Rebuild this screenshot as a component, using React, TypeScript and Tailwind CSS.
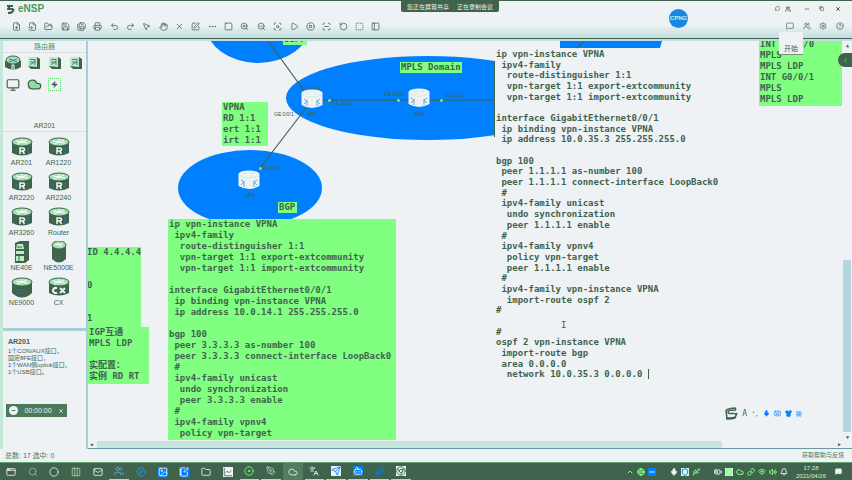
import type { ReactNode } from "react";
import {
  FilePlus, FileInput, FolderOpen, Save, SaveAll, Printer, Undo2, Redo2, MousePointer2, Hand, X, SquarePen,
  Ellipsis, Square, ZoomIn, ZoomOut, ScanSearch, Play, CircleStop, ScanLine, RotateCcw, BoxSelect, PanelLeft,
  MessageSquare, Settings, CircleHelp, Minus, Copy, Monitor, Zap, Search, Circle, Columns3, Mail,
  Compass, Globe, Image, Folder, NotebookPen, ChartLine, Disc, PenTool, Languages, Send, Bot, Feather,
  Chrome, ChevronUp, ChevronLeft, Mic, Shield, Usb, BatteryMedium, Wifi, Volume2, Keyboard, Shirt, Cloud,
  LayoutGrid, MessageCircle, Users, AppWindow, Cpu, Link, Bell,
} from "lucide-react";

const tools = [
  FilePlus, FileInput, FolderOpen, Save, SaveAll, Printer, Undo2, Redo2, MousePointer2, Hand, X, SquarePen,
  Ellipsis, Square, ZoomIn, ZoomOut, ScanSearch, Play, CircleStop, ScanLine, RotateCcw, BoxSelect, PanelLeft,
];

const leftConfig = `ip vpn-instance VPNA
 ipv4-family
  route-distinguisher 1:1
  vpn-target 1:1 export-extcommunity
  vpn-target 1:1 import-extcommunity

interface GigabitEthernet0/0/1
 ip binding vpn-instance VPNA
 ip address 10.0.14.1 255.255.255.0

bgp 100
 peer 3.3.3.3 as-number 100
 peer 3.3.3.3 connect-interface LoopBack0
 #
 ipv4-family unicast
  undo synchronization
  peer 3.3.3.3 enable
 #
 ipv4-family vpnv4
  policy vpn-target`;

const rightConfig = `ip vpn-instance VPNA
 ipv4-family
  route-distinguisher 1:1
  vpn-target 1:1 export-extcommunity
  vpn-target 1:1 import-extcommunity

interface GigabitEthernet0/0/1
 ip binding vpn-instance VPNA
 ip address 10.0.35.3 255.255.255.0

bgp 100
 peer 1.1.1.1 as-number 100
 peer 1.1.1.1 connect-interface LoopBack0
 #
 ipv4-family unicast
  undo synchronization
  peer 1.1.1.1 enable
 #
 ipv4-family vpnv4
  policy vpn-target
  peer 1.1.1.1 enable
 #
 ipv4-family vpn-instance VPNA
  import-route ospf 2
#

#
ospf 2 vpn-instance VPNA
 import-route bgp
 area 0.0.0.0
  network 10.0.35.3 0.0.0.0 `.split("\n");

const devices = ["AR201", "AR1220", "AR2220", "AR2240", "AR3260", "Router", "NE40E", "NE5000E", "NE9000", "CX"];

function DeviceIcon({ name }: { name: string }) {
  if (name === "NE40E")
    return (
      <svg viewBox="0 0 22 22" className="h-[22px] w-[22px]">
        <path d="M4 2 9 0h9v19l-4 3H4z" fill="#40634e" />
        <path d="M6 3h6l1 5H5zM5 10h8v3H5zM5 15h8v5H5z" fill="#b9efc4" />
        <path d="M6 6h5M8 15v5" stroke="#40634e" />
      </svg>
    );
  if (name === "NE5000E")
    return (
      <svg viewBox="0 0 22 22" className="h-[22px] w-[22px]">
        <path d="M4 4v14q7 7 14 0V4z" fill="#40634e" />
        <ellipse cx="11" cy="4" rx="7" ry="4" fill="#a6dfb4" stroke="#40634e" />
        <path d="m7 4 8-1M9 2l5 4" stroke="#fff" />
        <path d="M7 13h8M7 17h8" stroke="#3a82b8" strokeDasharray="1 3" />
      </svg>
    );
  const big = name === "NE9000";
  return (
    <svg viewBox="0 0 22 22" className="h-[22px] w-[22px]">
      <path d={big ? "M1 5v12q10 9 20 0V5z" : "M1 6v11q10 5 20 0V6z"} fill="#40634e" />
      <ellipse cx="11" cy="6" rx="10" ry="4" fill="#a6dfb4" stroke="#40634e" strokeWidth="1" />
      <path d="m5 5 12 2M16 4 6 8M11 3v3" stroke="#fff" />
      {name === "CX" ? (
        <g stroke="#e9f7ee" strokeWidth="2" fill="none">
          <path d="M9 12.500a2.500 2.500 0 1 0 0 4M12 12l5 5M17 12l-5 5" />
        </g>
      ) : big ? (
        <path d="M5 14h12M6 17h10" stroke="#3a82b8" strokeDasharray="1 2" />
      ) : (
        <g>
          <path d="M17 12v5M5 13v3" stroke="#267fc4" strokeDasharray="1 1" />
          <path d="M9 18v-6h2.500q2 0 2 1.500t-2 1.500H9m2.500 0 2 3" stroke="#eef8f2" strokeWidth="1.500" fill="none" />
        </g>
      )}
    </svg>
  );
}

function SwitchIcon() {
  return (
    <svg viewBox="0 0 14 14" className="h-[14px] w-[14px]">
      <path d="m1 1 9 0 3 2v10l-9 0-3-3z" fill="#40634e" />
      <path d="M1 1h9v10l-9-1z" fill="#b8ead0" />
      <path d="M3 3.500h5M3 6h5l-5 2.500M8 3v6" stroke="#55836a" fill="none" />
    </svg>
  );
}

function Router({ x, y }: { x: number; y: number }) {
  return (
    <g transform={`translate(${x} ${y})`}>
      <path d="M-10.500-6V6Q0 12 10.500 6V-6z" fill="#eef2f5" />
      <ellipse cy="-6" rx="10.500" ry="3.500" fill="#eef2f5" />
      <path d="M-9-4Q0 0 9-4M-5-7l3 1M5-7 2-6" stroke="#80e890" strokeWidth=".7" strokeDasharray="1 1.500" fill="none" />
      <path d="m-8 0 3 2-3 3m3 2V1M8 0 5 2l3 3M5 7V1" stroke="#5fa8d0" fill="none" />
    </g>
  );
}

function Note({ className, children }: { className: string; children: ReactNode }) {
  return <pre className={`absolute overflow-hidden bg-[#80ff80] px-px font-[inherit] leading-[11px] ${className}`}>{children}</pre>;
}

const taskbar = [
  { I: AppWindow, c: "text-[#eef2f5]", n: "Start" },
  { I: Search, c: "text-[#80c890]", n: "Search" },
  { I: Circle, c: "text-[#eef2f5]", n: "Assistant" },
  { I: Columns3, c: "text-[#a7d5b0]", n: "Task view" },
  { I: Mail, c: "text-[#eef2f5]", n: "Mail" },
  { I: Users, c: "text-[#5fb0df] border-b border-[#80ff80]", n: "Contacts" },
  { I: Compass, c: "text-[#2096ff]", n: "Browser" },
  { I: Image, c: "text-[#eef2f5] [&>svg]:bg-[#0080ff]", n: "Pictures" },
  { I: NotebookPen, c: "text-[#eef2f5] [&>svg]:bg-[#0080ff]", n: "Notes" },
  { I: Folder, c: "text-[#eef2f5]", n: "Files" },
  { I: ChartLine, c: "text-[#40634e] [&>svg]:bg-[#eef2f5]", n: "Monitor" },
  { I: Disc, c: "text-[#80ff80] border-b border-[#80ff80]", n: "Player" },
  { I: PenTool, c: "text-[#a7d5b0] border-b border-[#80ff80]", n: "Pen" },
  { I: Cloud, c: "text-[#eef2f5] bg-[#527d60]", n: "Simulator" },
  { I: Languages, c: "text-[#eef2f5] border-b border-[#80ff80]", n: "Translate" },
  { I: Send, c: "text-[#0080ff] border-b border-[#80ff80] [&>svg]:bg-[#eef2f5]", n: "Messages" },
  { I: Bot, c: "text-[#eef2f5] border-b border-[#80ff80] [&>svg]:bg-[#0080ff]", n: "Meeting" },
  { I: Feather, c: "text-[#0080ff] border-b border-[#80ff80]", n: "Editor" },
  { I: Chrome, c: "text-[#40634e] border-b border-[#80ff80] [&>svg]:bg-[#dff7e4]", n: "Chrome" },
];

const tray = [
  { I: ChevronUp, c: "text-[#80ff80]" }, { I: Globe, c: "text-[#80ff80]" },
  { I: Minus, c: "text-[#eef2f5] bg-[#0080ff]" }, { I: null, c: "" },
  { I: Mic, c: "text-[#eef2f5] fill-[#eef2f5]" }, { I: Shield, c: "text-[#0080ff] bg-[#d9f2e2]" }, { I: Usb, c: "text-[#80ff80]" },
  { I: null, c: "" }, { I: BatteryMedium, c: "text-[#eef2f5]" }, { I: Cpu, c: "text-[#80ff80] bg-[#eef2f5]" },
  { I: Cloud, c: "text-[#80ff80]" }, { I: Link, c: "text-[#80ff80]" }, { I: Wifi, c: "text-[#80ff80]" },
  { I: Volume2, c: "text-[#80ff80]" }, { I: Bell, c: "text-[#eef2f5]" },
];

export default function App() {
  return (
    <div className="flex h-screen flex-col overflow-hidden bg-[#eef2f5] font-['Liberation_Sans','Noto_Sans_CJK_SC',sans-serif] text-[#40634e]">
      <header className="relative z-10 flex h-[41px] shrink-0 flex-col border-t border-[#40634e] bg-linear-to-b from-[#eef2f5] from-60% to-[#b4d9d8]">
        <div className="flex h-[15px] items-center justify-between pl-[7px] pr-[11px]">
          <h1 className="flex items-center gap-[3px] pt-px text-[10px] font-bold leading-[12px]">
            <svg viewBox="0 0 8 9" className="h-[9px] w-2" fill="none" stroke="currentColor" strokeWidth="2">
              <path d="M0 1h6M3 1 1 4h4q2 0 1 2T1 8" />
            </svg>
            <span className="text-[#4b9a61]">eNSP</span>
          </h1>
          <div className="flex items-center">
            <button aria-label="Share" className="mr-[5px]"><MessageCircle size={5} strokeWidth={3} /></button>
            <button aria-label="Account" className="mr-[13px]"><Users size={6} strokeWidth={3} /></button>
            <button aria-label="Minimize" className="mr-[9px]"><Minus size={6} strokeWidth={3} /></button>
            <button aria-label="Restore" className="mr-[11px]"><Copy size={5} strokeWidth={3} /></button>
            <button aria-label="Close"><X size={6} strokeWidth={4} /></button>
          </div>
        </div>
        <div className="flex h-[20px] items-center justify-between pl-2 pr-1">
          <div className="flex w-[376px]">
            {tools.map((T, i) => (
              <button key={i} aria-label={`Tool ${i + 1}`} className="flex flex-1 justify-center">
                <T size={9} strokeWidth={2} />
              </button>
            ))}
          </div>
          <div className="flex w-[66px]">
            {[MessageSquare, Users, Settings, CircleHelp].map((T, i) => (
              <button key={i} aria-label={`Option ${i + 1}`} className="flex flex-1 justify-center">
                <T size={8} strokeWidth={2} />
              </button>
            ))}
          </div>
        </div>
        <div className="mt-auto h-[3px] border-t border-[#40634e] bg-[#c3dbe8]" />
        <div className="absolute left-[401px] top-0 flex h-[11px] w-[98px] items-center justify-center gap-2 rounded-b-xs bg-[#40634e] text-[6px] leading-[8px] text-[#eef2f5]">
          <span>您正在屏幕共享</span>
          <span>正在录制会议</span>
        </div>
        <div className="absolute left-[669px] top-[8px] flex size-[19px] items-center justify-center rounded-full bg-[#1787e8] text-[6px] font-bold text-[#c5f5dc]">CPNG</div>
        <div className="absolute right-[49px] top-[31px] flex h-[23px] w-6 items-end justify-center border-b border-[#6f927b] bg-[#eef2f5] text-[7px] leading-[10px]">开始</div>
      </header>

      <main className="flex min-h-0 flex-1">
        <aside className="flex w-[88px] shrink-0 flex-col border-l-3 border-r-2 border-l-[#c5e9d9] border-r-[#a7cfd5] text-center">
          <h2 className="h-3 border-b border-dotted border-[#80ff80] text-[7px] leading-[12px] text-[#4b9a61]">路由器</h2>
          <div className="grid grid-cols-4 items-center justify-items-center gap-y-[6px] pt-[2px]">
            <svg viewBox="0 0 16 16" className="h-4 w-4">
              <path d="M0 6v6q8 5 16 0V6z" fill="#40634e" />
              <ellipse cx="8" cy="5" rx="7" ry="4" fill="#a6dfb4" stroke="#40634e" />
              <path d="m4 4 8 3m0-3L4 7" stroke="#2d83c0" />
              <path d="M7 14v-4h2v4" stroke="#fff" fill="none" />
            </svg>
            <SwitchIcon /><SwitchIcon /><SwitchIcon />
            <Monitor size={14} strokeWidth={2} />
            <Cloud size={15} strokeWidth={2} fill="#8edba4" />
            <span className="flex size-[13px] items-center justify-center border border-dotted border-[#60d870]"><Zap size={7} fill="#40634e" /></span>
          </div>
          <h2 className="mt-[28px] h-3 border-b border-dotted border-[#80ff80] text-[7px] leading-[12px]">AR201</h2>
          <div className="grid w-[74px] grid-cols-2 pt-[4px]">
            {devices.map((d) => (
              <button key={d} className="flex h-[35px] flex-col items-center whitespace-nowrap text-[7px] leading-[8px]">
                <DeviceIcon name={d} />
                <span className="mt-px">{d}</span>
              </button>
            ))}
          </div>
          <section className="mt-auto h-[121px] border-t-3 border-[#a7cfd5] px-[5px] pt-[7px] text-left text-[6px] leading-[7px]">
            <h3 className="mb-[2px] text-[7px] font-bold leading-[8px]">AR201</h3>
            <p className="whitespace-nowrap">1个CON/AUX接口，<br />固定8FE接口，<br />1个WAN侧uplink接口，<br />1个USB接口。</p>
            <div className="-ml-[2px] mt-[28px] flex h-[13px] w-[61px] items-center justify-between bg-[#4c7b5c] px-[3px] text-[7px] text-[#eef2f5]">
              <span className="flex size-[9px] items-center justify-center rounded-full bg-[#eef2f5] text-[#40634e]"><Minus size={5} strokeWidth={4} /></span>
              <span>00:00:00</span>
              <X size={6} strokeWidth={3} />
            </div>
          </section>
        </aside>

        <div className="relative min-w-0 flex-1 overflow-hidden border-b border-[#6a9aa0] font-['DejaVu_Sans_Mono','Noto_Sans_CJK_SC',monospace] text-[9px] font-bold">
          <svg viewBox="88 41 764 408" className="absolute left-0 top-0 h-[408px] w-[764px]">
            <g fill="#0080ff">
              <ellipse cx="258" cy="25" rx="52" ry="38" />
              <ellipse cx="428" cy="98" rx="142" ry="42" />
              <ellipse cx="250" cy="188" rx="72" ry="38" />
              <path d="M560 41h102l-2 7H560z" />
            </g>
            <path d="m268 41 37 51M306 108l-46 60M322 100h173M577 48l7-7" stroke="#40634e" strokeWidth="1.200" />
            <path d="M494.500 61v76" stroke="#40634e" />
            {[[329, 100], [398, 100], [441, 100], [260, 168]].map(([x, y]) => (
              <rect key={x} x={x - 1} y={y - 1} width="3" height="3" fill="#80ff80" stroke="#40634e" strokeWidth=".5" />
            ))}
            <Router x={312} y={99} />
            <Router x={419} y={98} />
            <Router x={249} y={180} />
            <g fill="#40634e" fontSize="5" fontWeight="400" fontFamily="Liberation Sans">
              <text x="307" y="116">AR1</text>
              <text x="414" y="116">AR2</text>
              <text x="245" y="197">AR3</text>
              <text x="274" y="116">GE 0/0/1</text>
              <text x="301" y="89">GE 0/0/0</text>
              <text x="332" y="105">GE 0/0/2</text>
              <text x="384" y="96">GE 0/0/0</text>
              <text x="445" y="97">GE 0/0/1</text>
              <text x="262" y="170">GE 0/0/0</text>
            </g>
          </svg>

          <Note className="-top-[7px] left-[195px] h-[11px] w-6">OSPF</Note>
          <Note className="left-[312px] top-[21px] w-[62px]">MPLS Domain</Note>
          <Note className="left-[134px] top-[61px] w-[46px]">{"VPNA\nRD 1:1\nert 1:1\nirt 1:1"}</Note>
          <Note className="left-[190px] top-[161px] w-[19px]">BGP</Note>
          <Note className="left-[80px] top-[178px] h-[221px] w-[228px]">{leftConfig}</Note>
          <Note className="left-0 top-[206px] h-[81px] w-[53px]"><span className="-ml-[2px] block">{"ID 4.4.4.4\n\n\n0\n\n\n1"}</span></Note>
          <Note className="left-0 top-[286px] h-[57px] w-[61px]">{"IGP互通\nMPLS LDP\n\n实配置：\n实例 RD RT"}</Note>
          <Note className="-top-[2px] left-[671px] h-[67px] w-[83px]">{"INT G0/0/0\nMPLS\nMPLS LDP\nINT G0/0/1\nMPLS\nMPLS LDP"}</Note>

          <pre className="absolute left-[407px] top-[8px] grid h-[331px] w-[230px] auto-rows-fr bg-[#eef2f5] pl-px font-[inherit] leading-[11px]">
            {rightConfig.map((line, i) => (
              <span key={i} className="min-h-0">
                {line}
                {i === rightConfig.length - 1 && <span className="border-l border-[#40634e]" />}
              </span>
            ))}
          </pre>
          <span className="absolute left-[473px] top-[279px] font-normal leading-[11px]">I</span>

          <div className="absolute right-0 top-[12px] flex h-[14px] w-[14px] items-center justify-center rounded-l-full bg-[#40634e] text-[#80ff80]"><ChevronLeft size={7} /></div>
          <span className="absolute right-[3px] top-0 text-[5px] leading-[8px]">▲</span>
          <span className="absolute bottom-[7px] right-[3px] text-[5px] leading-[8px]">▼</span>
          <div className="absolute bottom-[16px] right-px h-[172px] w-2 bg-[#b4d5df]" />
          <div className="absolute bottom-0 left-[9px] h-[7px] w-[625px] bg-[#c4e4dc]" />
          <span className="absolute bottom-0 left-[2px] text-[5px] leading-[8px]">◀</span>
          <span className="absolute bottom-0 right-[11px] text-[5px] leading-[8px]">▶</span>

          <div className="absolute bottom-[28px] right-[50px] flex items-center gap-1 font-normal">
            <svg viewBox="0 0 13 13" className="size-[13px]" fill="none" stroke="#40634e" strokeWidth="1.500">
              <path d="M1 3q5-2 9-2l1 2M11 3Q3 3 3 5t4 1.500 4 1.500-2 2.500-8 .500M1 3l1 9q5 0 8-1l2-5" />
            </svg>
            <span className="text-[8px] leading-[10px]">A</span>
            <span className="w-[8px] text-center text-[6px]">’,</span>
            <Mic size={7} color="#0080ff" fill="#0080ff" />
            <Keyboard size={7} color="#0080ff" />
            <Shirt size={7} color="#0080ff" fill="#0080ff" />
            <LayoutGrid size={6} color="#0080ff" />
          </div>
        </div>
      </main>

      <footer className="shrink-0">
        <div className="flex h-[13px] items-center justify-between pl-[5px] pr-2 text-[7px] leading-[13px] text-[#3f7a55]">
          <span>总数: 17 选中: 0</span>
          <a href="#help" className="text-[6px]">获取帮助与反馈</a>
        </div>
        <div className="flex h-[18px] items-stretch justify-between border-t border-[#62a070] bg-[#40634e]">
          <nav className="flex w-[412px]">
            {taskbar.map(({ I, c, n }) => (
              <button key={n} aria-label={n} className={`mx-px flex flex-1 items-center justify-center ${c}`}>
                <I size={10} strokeWidth={2} />
              </button>
            ))}
          </nav>
          <div className="flex items-center gap-[3px] pr-[10px] text-[#d2efd9]">
            {tray.map(({ I, c }, i) => (I ? <I key={i} size={8} strokeWidth={3} className={c} /> : <span key={i} className="w-2" />))}
            <time className="ml-[4px] w-[32px] text-center text-[6px] leading-[8px]">17:28<br />2021/04/26</time>
            <button aria-label="Notifications" className="ml-[5px]"><MessageSquare size={7} strokeWidth={3} fill="#eef2f5" /></button>
          </div>
        </div>
      </footer>
    </div>
  );
}
